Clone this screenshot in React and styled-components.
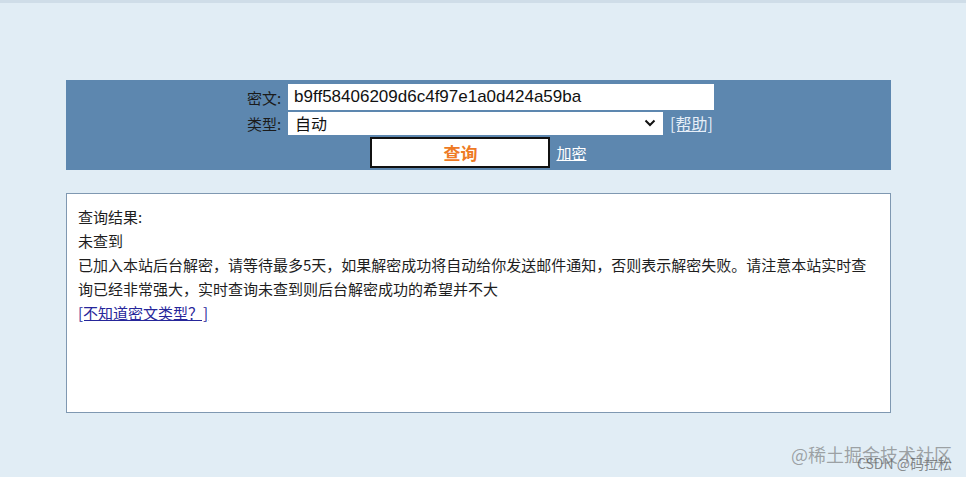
import React from "react";
import styled, { createGlobalStyle } from "styled-components";

const GlobalStyle = createGlobalStyle`
  html, body {
    margin: 0;
    padding: 0;
    background: #e1edf5;
  }
  body {
    font-family: "Liberation Sans", "Noto Sans CJK SC", Arial, sans-serif;
    color: #1c1c1c;
  }
`;

const Page = styled.div`
  position: relative;
  width: 966px;
  height: 477px;
  overflow: hidden;
  border-top: 3px solid #cfdde8;
  box-sizing: border-box;
  padding: 77px 0 0 66px;
`;

const Wrap = styled.div`
  width: 825px;
  display: flex;
  flex-direction: column;
  gap: 23px;
`;

const SearchBar = styled.form`
  background: #5d87af;
  padding: 4px 0 2px;
  display: flex;
  flex-direction: column;
  align-items: center;
  gap: 1px;
`;

const FieldGrid = styled.div`
  display: grid;
  grid-template-columns: auto auto;
  column-gap: 7px;
  row-gap: 1px;
  align-items: center;
  margin-left: 4px;
`;

const Label = styled.label`
  font-size: 15px;
  color: #1b1b1b;
  text-align: right;
  font-family: "Noto Sans CJK SC", sans-serif;
`;

const TextInput = styled.input`
  width: 426px;
  height: 26px;
  box-sizing: border-box;
  border: none;
  padding: 0 6px;
  font-size: 17px;
  font-family: "Liberation Sans", Arial, sans-serif;
  color: #111;
  background: #fff;
  outline: none;
`;

const SelectRow = styled.div`
  display: flex;
  align-items: center;
  gap: 7px;
`;

const SelectBox = styled.div`
  position: relative;
  width: 375px;
  height: 23px;
  background: #fff;
  display: flex;
  align-items: center;
  justify-content: space-between;
  padding: 0 7px;
  box-sizing: border-box;
  font-size: 16px;
  font-family: "Noto Sans CJK SC", sans-serif;
  color: #111;
`;

const BarLink = styled.a`
  color: ${(p) => (p.$light ? "#e6eef7" : "#ffffff")};
  font-size: ${(p) => (p.$light ? "16px" : "15px")};
  font-family: "Noto Sans CJK SC", sans-serif;
  text-decoration: underline;
  cursor: pointer;
`;

const ActionRow = styled.div`
  display: flex;
  align-items: center;
  gap: 6px;
  margin-top: 1px;
`;

const QueryButton = styled.button`
  width: 180px;
  height: 31px;
  background: #fff;
  border: 2px solid #111;
  color: #ee7a24;
  font-weight: bold;
  font-size: 17px;
  font-family: "Noto Sans CJK SC", sans-serif;
  padding: 0;
  cursor: pointer;
`;

const ResultBox = styled.div`
  height: 220px;
  box-sizing: border-box;
  background: #fff;
  border: 1px solid #7f98b1;
  padding: 11px 20px 0 11px;
  font-size: 15px;
  line-height: 24px;
  font-family: "Noto Sans CJK SC", sans-serif;
  color: #1e1e1e;
`;

const Line = styled.div``;

const ResultLink = styled.a`
  color: #26269a;
  text-decoration: underline;
`;

const Watermark = styled.div`
  position: absolute;
  right: 14px;
  bottom: 12px;
  text-align: right;
  font-family: "Noto Sans CJK SC", sans-serif;
`;

const WatermarkMain = styled.div`
  font-size: 18px;
  color: rgba(110, 110, 110, 0.6);
  line-height: 22px;
`;

const WatermarkSub = styled.div`
  position: absolute;
  right: 0;
  top: 12px;
  font-size: 14px;
  line-height: 16px;
  color: rgba(90, 90, 90, 0.7);
  white-space: nowrap;
`;

const Chevron = () => (
  <svg width="12" height="8" viewBox="0 0 12 8">
    <path d="M1.5 1.5 L6 6 L10.5 1.5" fill="none" stroke="#111" strokeWidth="2" />
  </svg>
);

export default function App() {
  return (
    <>
      <GlobalStyle />
      <Page>
        <Wrap>
          <SearchBar onSubmit={(e) => e.preventDefault()}>
            <FieldGrid>
              <Label>密文:</Label>
              <TextInput defaultValue="b9ff58406209d6c4f97e1a0d424a59ba" />
              <Label>类型:</Label>
              <SelectRow>
                <SelectBox>
                  <span>自动</span>
                  <Chevron />
                </SelectBox>
                <BarLink $light>[帮助]</BarLink>
              </SelectRow>
            </FieldGrid>
            <ActionRow>
              <QueryButton type="submit">查询</QueryButton>
              <BarLink>加密</BarLink>
            </ActionRow>
          </SearchBar>
          <ResultBox>
            <Line>查询结果:</Line>
            <Line>未查到</Line>
            <Line>
              已加入本站后台解密，请等待最多5天，如果解密成功将自动给你发送邮件通知，否则表示解密失败。请注意本站实时查询已经非常强大，实时查询未查到则后台解密成功的希望并不大
            </Line>
            <Line>
              <ResultLink>[不知道密文类型？]</ResultLink>
            </Line>
          </ResultBox>
        </Wrap>
        <Watermark>
          <WatermarkMain>@稀土掘金技术社区</WatermarkMain>
          <WatermarkSub>CSDN @码拉松</WatermarkSub>
        </Watermark>
      </Page>
    </>
  );
}
